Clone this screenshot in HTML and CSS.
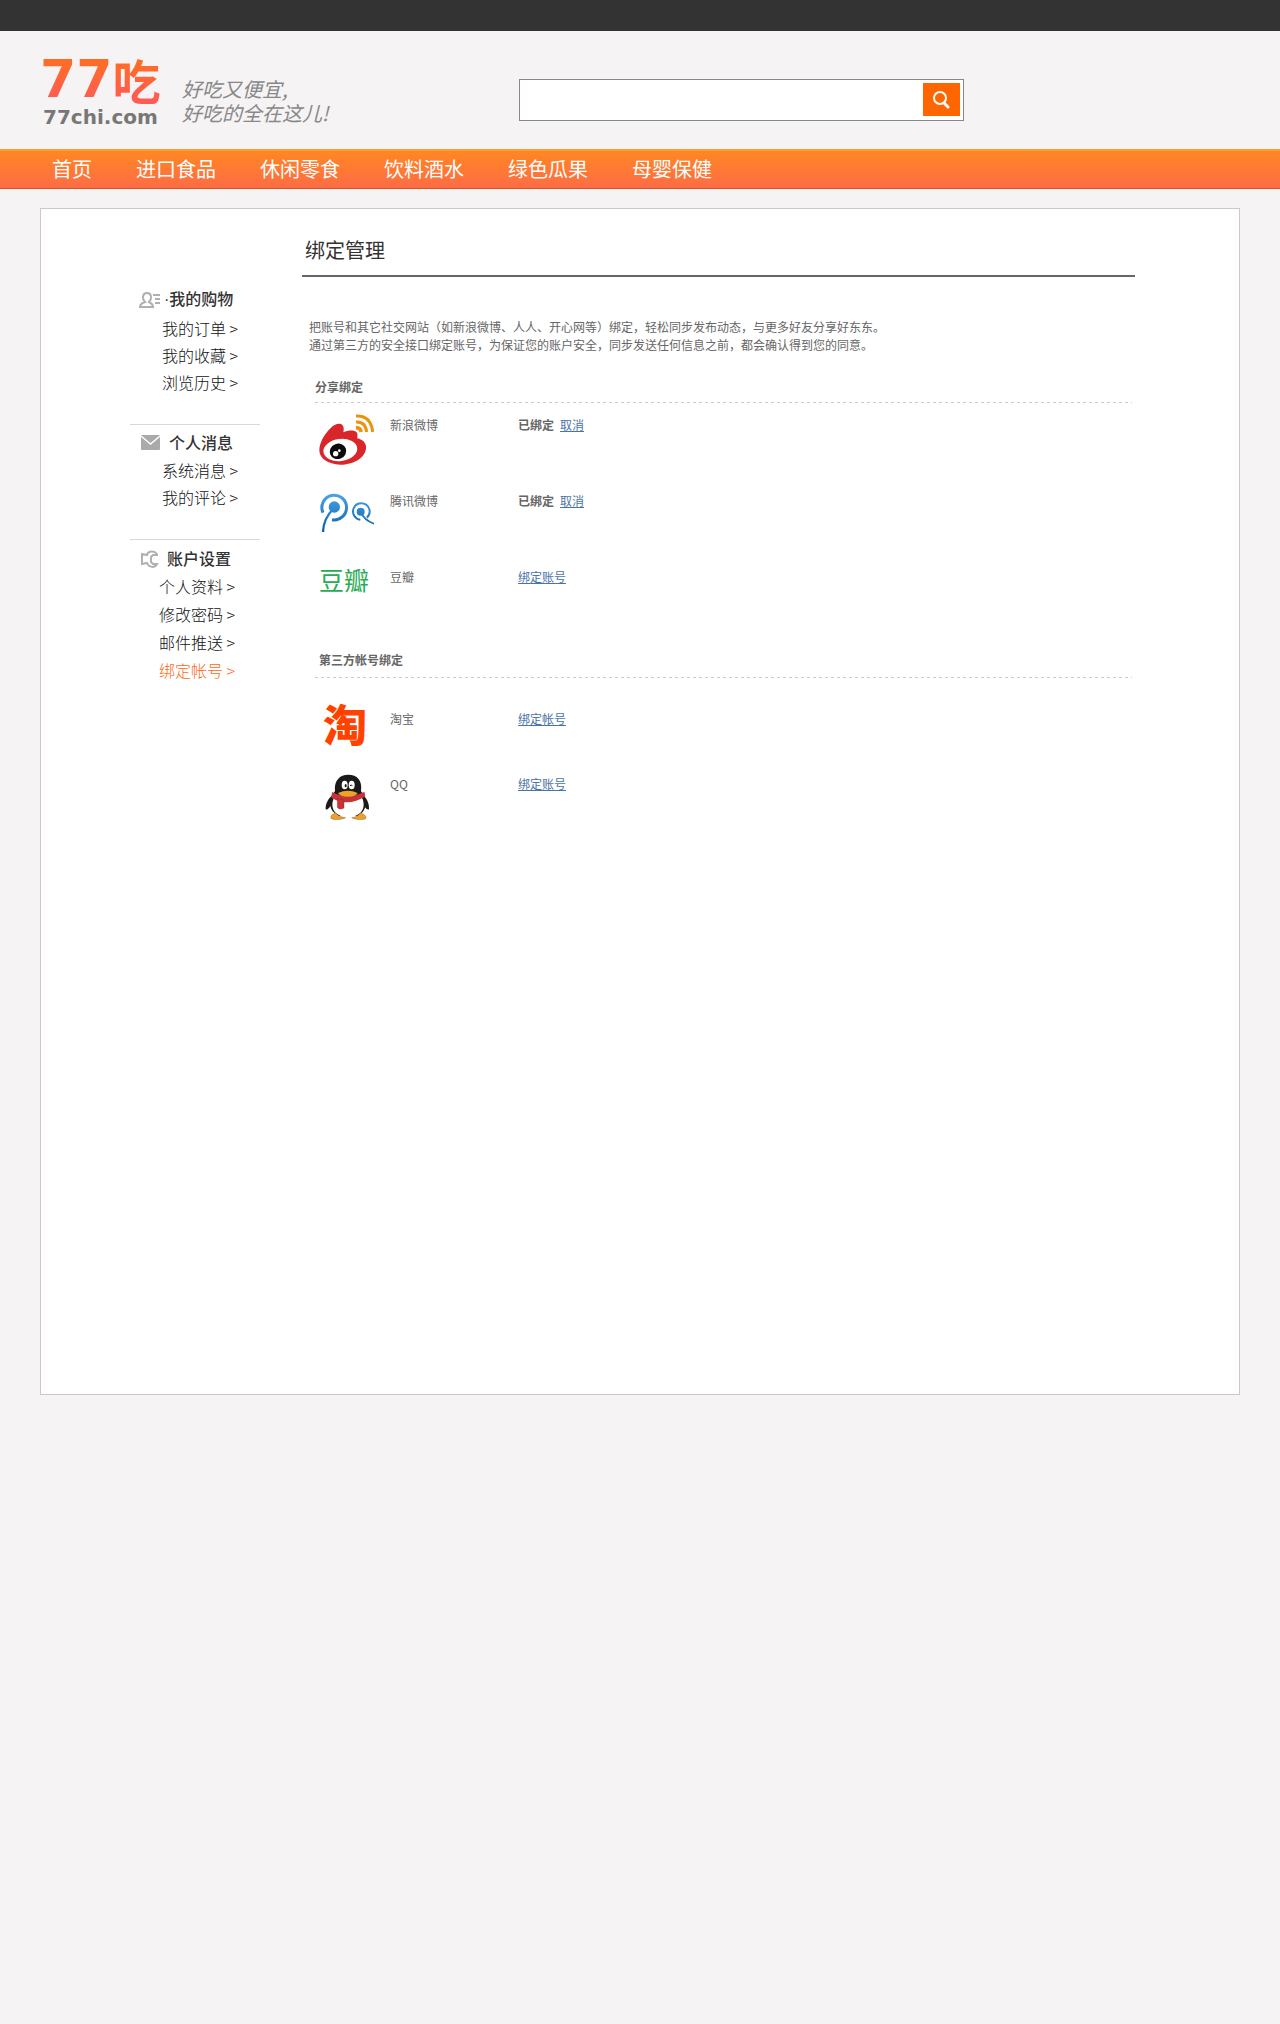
FILE: index.html
```html
<!DOCTYPE html>
<html lang="zh-CN">
<head>
<meta charset="utf-8">
<meta name="viewport" content="width=device-width, initial-scale=1">
<title>绑定管理 - 77吃</title>
<link rel="stylesheet" href="styles.css">
</head>
<body>
<div class="topbar"></div>
<header class="header">
  <div class="brand">
    <a class="logo" href="#">
      <span class="logo-name"><span class="logo-digits">77</span><span class="logo-han">吃</span></span>
      <span class="logo-domain">77chi.com</span>
    </a>
    <p class="slogan">好吃又便宜,<br>好吃的全在这儿!</p>
  </div>
  <form class="search" role="search">
    <input class="search-input" type="search" aria-label="搜索">
    <button class="search-button" type="submit" aria-label="搜索">
      <svg width="20" height="20" viewBox="0 0 20 20" fill="none" stroke="#fff"><circle cx="8" cy="8" r="6" stroke-width="2"/><path d="M12 13l4 4" stroke-width="3" stroke-linecap="round"/></svg>
    </button>
  </form>
</header>
<nav class="nav" aria-label="商品分类">
  <a href="#">首页</a>
  <a href="#">进口食品</a>
  <a href="#">休闲零食</a>
  <a href="#">饮料酒水</a>
  <a href="#">绿色瓜果</a>
  <a href="#">母婴保健</a>
</nav>
<div class="card">
  <aside class="side">
    <section class="side-group">
      <h2 class="side-title">
        <svg width="24" height="20" viewBox="0 0 24 20" fill="none" stroke="#b0b0b0" stroke-width="2"><path d="M2 18h13c0-3-2-4-4-5 3-3 3-9-2-9s-5 6-2 9c-3 1-5 2-5 5z"/><path d="M15 6h7M17 10h5M17 14h5"/></svg>
        <span><span class="dot">·</span>我的购物</span>
      </h2>
      <ul class="side-list">
        <li><a href="#">我的订单 &gt;</a></li>
        <li><a href="#">我的收藏 &gt;</a></li>
        <li><a href="#">浏览历史 &gt;</a></li>
      </ul>
    </section>
    <section class="side-group">
      <h2 class="side-title side-title-wide">
        <svg width="24" height="20" viewBox="0 0 24 20"><rect x="3" y="3" width="19" height="15" rx="1" fill="#aaa"/><path d="M3 4l9.500 8L22 4" fill="none" stroke="#fff" stroke-width="1.500"/></svg>
        <span>个人消息</span>
      </h2>
      <ul class="side-list">
        <li><a href="#">系统消息 &gt;</a></li>
        <li><a href="#">我的评论 &gt;</a></li>
      </ul>
    </section>
    <section class="side-group side-account">
      <h2 class="side-title side-title-wide">
        <svg width="24" height="20" viewBox="0 0 24 20" fill="none" stroke="#b0b0b0" stroke-width="2"><path d="M19 6C16 2 10 3 9 7L4 6v10l5-1c2 5 8 5 10 1h-4l-2-2V9l2-2h4z"/></svg>
        <span>账户设置</span>
      </h2>
      <ul class="side-list">
        <li><a href="#">个人资料 &gt;</a></li>
        <li><a href="#">修改密码 &gt;</a></li>
        <li><a href="#">邮件推送 &gt;</a></li>
        <li><a class="current" href="#" aria-current="page">绑定帐号 &gt;</a></li>
      </ul>
    </section>
  </aside>
  <main class="main">
    <h1 class="page-title">绑定管理</h1>
    <p class="intro">把账号和其它社交网站（如新浪微博、人人、开心网等）绑定，轻松同步发布动态，与更多好友分享好东东。<br>通过第三方的安全接口绑定账号，为保证您的账户安全，同步发送任何信息之前，都会确认得到您的同意。</p>
    <section class="bind">
      <h2 class="bind-title">分享绑定</h2>
      <ul class="bind-list">
        <li class="bind-row">
          <svg class="bind-icon" viewBox="15 21 180 180">
            <path d="M60 71C73 56 91 53 97 60c5 6 5 14 3 22 13-6 33-8 40 0 5 6 1 12 2 18 16 4 28 14 26 31-4 29-39 48-77 48-38-1-63-19-63-43 0-22 14-47 32-65z" fill="#d8262b"/>
            <ellipse cx="91" cy="135" rx="51" ry="33" fill="#fff" transform="rotate(-7 91 135)"/>
            <ellipse cx="84" cy="139" rx="25" ry="23" fill="#0b0b0b" transform="rotate(-20 84 139)"/>
            <circle cx="77" cy="146" r="8" fill="#fff"/><circle cx="88" cy="137" r="4" fill="#fff"/>
            <g fill="none" stroke="#e9930f" stroke-width="9"><path d="M138 33q45-2 50 48"/><path d="M138 51q29-1 32 30"/><path d="M138 68q14 0 15 13" stroke-width="11"/></g>
          </svg>
          <span class="bind-name">新浪微博</span>
          <span class="bind-state"><b>已绑定</b><a href="#">取消</a></span>
        </li>
        <li class="bind-row">
          <svg class="bind-icon" viewBox="15 249 180 180">
            <defs><linearGradient id="sky" gradientUnits="userSpaceOnUse" x1="0" y1="266" x2="0" y2="380"><stop offset="0" stop-color="#4aa5e8"/><stop offset="1" stop-color="#0d5fa5"/></linearGradient></defs>
            <g fill="none" stroke="url(#sky)" stroke-width="9"><path d="M39 323A37 37 0 1 1 66 344"/><path d="M73 308Q40 340 39 381" stroke-width="7"/><path d="M156 344A25 25 0 1 1 174 334" stroke-width="6" transform="rotate(12 152 320)"/><path d="M152 320q10 26 40 36" stroke-width="5"/></g>
            <circle cx="73" cy="306" r="17" fill="url(#sky)"/><circle cx="152" cy="320" r="12" fill="url(#sky)"/>
          </svg>
          <span class="bind-name">腾讯微博</span>
          <span class="bind-state"><b>已绑定</b><a href="#">取消</a></span>
        </li>
        <li class="bind-row">
          <span class="bind-icon mark-douban" aria-hidden="true">豆瓣</span>
          <span class="bind-name">豆瓣</span>
          <span class="bind-state"><a href="#">绑定账号</a></span>
        </li>
      </ul>
    </section>
    <section class="bind bind-third">
      <h2 class="bind-title">第三方帐号绑定</h2>
      <ul class="bind-list">
        <li class="bind-row">
          <span class="bind-icon mark-taobao" aria-hidden="true">淘</span>
          <span class="bind-name">淘宝</span>
          <span class="bind-state"><a href="#">绑定帐号</a></span>
        </li>
        <li class="bind-row">
          <svg class="bind-icon" viewBox="15 228 180 180">
            <path d="M67 300c-14 13-21 28-20 43 7 3 14-8 17-15zM159 300c14 13 19 28 18 43-7 3-14-8-17-15z" fill="#1c1a19"/>
            <path d="M75 288c-3-32 14-49 40-49s43 17 38 49c19 29 17 54 1 67l-10 8H85l-10-8c-19-14-20-41 0-67z" fill="#1c1a19"/>
            <path d="M75 303h78c16 24 10 63-39 63s-55-39-39-63z" fill="#fff"/>
            <path d="M66 291q47 25 97-1l3 14q-52 34-102 4z" fill="#c63338"/><path d="M82 310l20 5v24c-7 5-18 4-20-3z" fill="#c63338" stroke="#7d1d20" stroke-width="1"/>
            <ellipse cx="104" cy="270" rx="9" ry="13" fill="#fff"/><ellipse cx="125" cy="270" rx="9" ry="13" fill="#fff"/>
            <ellipse cx="107" cy="272" rx="3" ry="5" fill="#111"/><path d="M120 273q4-7 7 0" fill="none" stroke="#111" stroke-width="3"/>
            <path d="M84 294q30-14 59 0-5 11-29 11t-30-11z" fill="#f0a325"/>
            <path d="M77 354c-10 2-18 11-13 17 12 5 36 2 43-3-10-1-24-5-30-14zM151 354c10 2 21 11 16 17-12 5-35 2-42-3 10-1 20-5 26-14z" fill="#eda02a" stroke="#6b4514" stroke-width="1"/>
          </svg>
          <span class="bind-name">QQ</span>
          <span class="bind-state"><a href="#">绑定账号</a></span>
        </li>
      </ul>
    </section>
  </main>
</div>
</body>
</html>
```
FILE: styles.css
```css
* { box-sizing: border-box; }
body {
  margin: 0;
  background: #f5f3f4;
  color: #666;
  font: 12px/18px "Noto Sans CJK SC", "Liberation Sans", sans-serif;
}
h1, h2, p, ul { margin: 0; padding: 0; }
ul { list-style: none; }
a { color: inherit; text-decoration: none; }
svg { display: block; }

.topbar { height: 31px; background: #333; }

/* header */
.header {
  display: flex;
  align-items: flex-start;
  min-height: 118px;
  padding: 22px 40px 0;
}
.brand { display: flex; flex: 0 0 479px; gap: 22px; }
.logo { width: 120px; white-space: nowrap; }
.logo-name {
  display: flex;
  align-items: center;
  height: 52px;
  color: transparent;
  background: linear-gradient(#ff6c28 20%, #ff5b55 90%);
  background-clip: text;
  -webkit-background-clip: text;
  font-weight: bold;
}
.logo-digits { font: bold 52px/56px "DejaVu Sans", sans-serif; }
.logo-han { font-size: 48px; line-height: 52px; }
.logo-domain {
  display: block;
  padding-left: 3px;
  color: #777;
  font: bold 20px/24px "DejaVu Sans", sans-serif;
}
.slogan {
  padding-top: 24px;
  color: #888;
  font-size: 20px;
  font-style: italic;
  line-height: 24px;
  white-space: nowrap;
}
.search {
  display: flex;
  flex: 0 1 445px;
  height: 42px;
  margin-top: 26px;
  padding: 3px;
  border: 1px solid #888;
  background: #fff;
}
.search-input {
  flex: 1;
  min-width: 0;
  padding: 0 8px;
  border: 0;
  outline: 0;
  background: none;
  font: inherit;
  font-size: 16px;
}
.search-button {
  display: flex;
  align-items: center;
  justify-content: center;
  width: 37px;
  height: 33px;
  padding: 0;
  border: 0;
  background: #f60;
}

/* category bar */
.nav {
  display: flex;
  gap: 44px;
  height: 40px;
  padding-left: 52px;
  border-top: 2px solid #fc9c32;
  border-bottom: 1px solid #e0501e;
  background: linear-gradient(#ff8723, #fd6c45);
  color: #fff;
  font-size: 20px;
  line-height: 36px;
}

/* content card */
.card {
  display: flex;
  align-items: flex-start;
  gap: 42px;
  margin: 19px 40px 0;
  padding: 0 104px 558px 89px;
  border: 1px solid #c9c9c9;
  background: #fff;
}
.side { flex: 0 0 130px; padding-top: 72px; }
.side-group { padding: 3px 0 28px; color: #111; }
.side-group + .side-group { border-top: 1px solid #d9d9d9; }
.side-title {
  display: flex;
  align-items: center;
  padding-left: 8px;
  margin-bottom: 1px;
  color: #333;
  font-size: 16px;
  font-weight: 500;
  line-height: 28px;
  white-space: nowrap;
}
.dot { padding-left: 2px; font-family: "Liberation Sans", sans-serif; }
.side-title-wide { gap: 7px; }
.side-list { padding-left: 32px; font-size: 16px; font-weight: 300; line-height: 27px; }
.side-account { padding-top: 4px; }
.side-account .side-title { gap: 5px; margin-bottom: 0; }
.side-account .side-list { padding-left: 29px; line-height: 28px; }
.current { color: #ff6a14; }

.main { flex: 1; min-width: 0; }
.page-title {
  padding: 27px 3px 11px;
  border-bottom: 2px solid #666;
  color: #333;
  font-size: 20px;
  font-weight: 400;
  line-height: 28px;
}
.intro { padding: 41px 0 24px 7px; }
.bind { margin: 0 3px 0 13px; }
.bind-title {
  padding-bottom: 7px;
  background: repeating-linear-gradient(90deg, #ccc 0 3px, transparent 3px 6px) bottom / 100% 1px no-repeat;
  font-size: 12px;
  line-height: 18px;
}
.bind-list { padding-top: 9px; }
.bind-row {
  display: grid;
  grid-template-columns: 75px 128px 1fr;
  align-items: start;
  min-height: 76px;
}
.bind-icon { width: 60px; height: 60px; }
.bind-name, .bind-state { padding-top: 4px; }
.bind-state { display: flex; gap: 6px; }
.bind-state a { color: #4a74a8; text-decoration: underline; }
.mark-douban { padding-left: 4px; color: #2aac55; font-size: 25px; font-weight: 400; line-height: 30px; }
.mark-taobao { padding-left: 8px; color: #ff4200; font-size: 44px; font-weight: 900; line-height: 34px; }
.bind-third { margin-top: 11px; }
.bind-third .bind-title { padding: 0 0 9px 4px; }
.bind-third .bind-list { padding-top: 28px; }
.bind-third .bind-row { min-height: 65px; }
```
